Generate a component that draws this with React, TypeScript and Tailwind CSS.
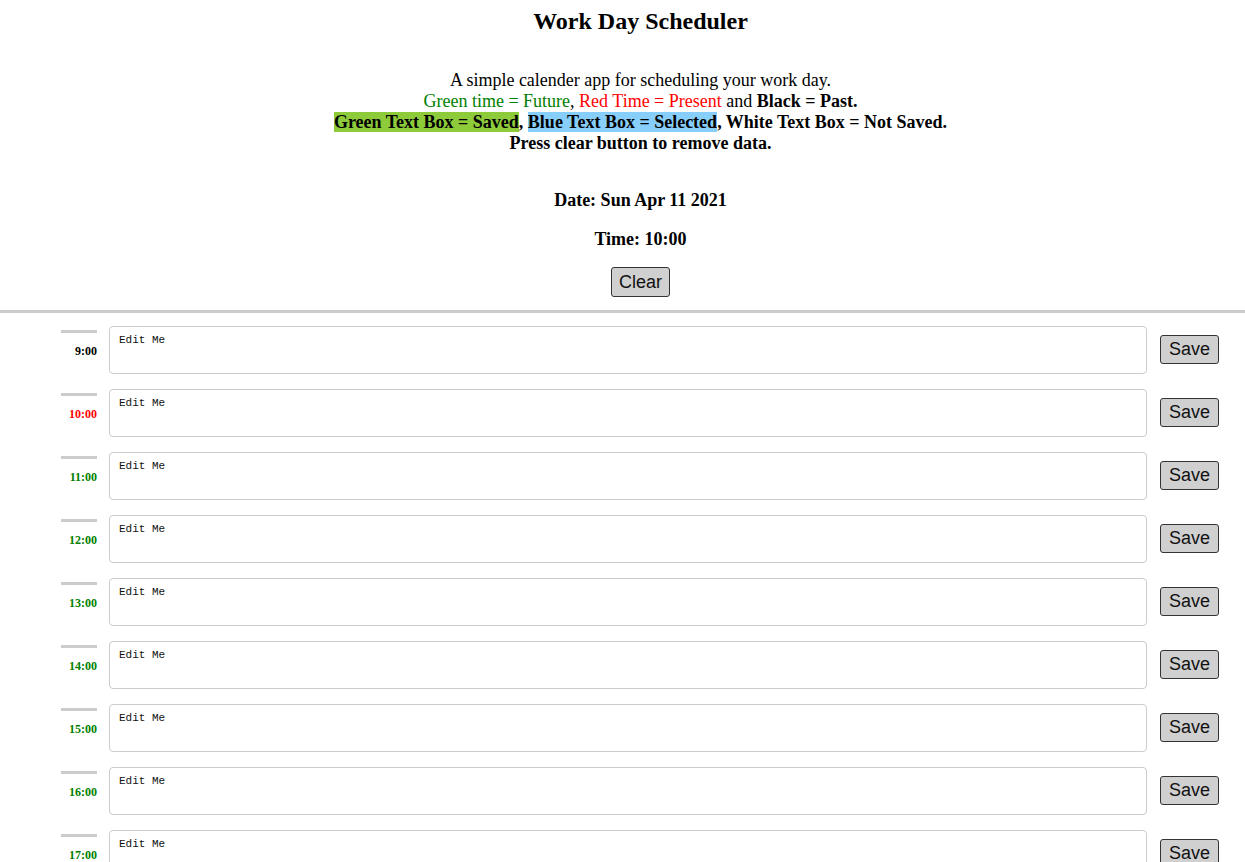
import { useState } from 'react';

const hours = [9, 10, 11, 12, 13, 14, 15, 16, 17];
const currentHour = 10;

function hourColor(h: number) {
  if (h < currentHour) return 'text-black';
  if (h === currentHour) return 'text-[#ff0000]';
  return 'text-[#008000]';
}

export default function App() {
  const [notes, setNotes] = useState<Record<number, string>>(
    Object.fromEntries(hours.map((h) => [h, 'Edit Me']))
  );

  return (
    <div className="min-h-screen bg-white text-black font-['Liberation_Serif',serif]">
      {/* Header */}
      <header className="pl-[36px] text-center">
        <h1 className="pt-[7px] text-[24px] leading-[28px] font-bold">Work Day Scheduler</h1>
        <div className="mt-[35px] text-[18px] leading-[21px]">
          <p>A simple calender app for scheduling your work day.</p>
          <p>
            <span className="text-[#008000]">Green time = Future</span>,{' '}
            <span className="text-[#ff0000]">Red Time = Present</span> and{' '}
            <b>Black = Past.</b>
          </p>
          <p className="font-bold">
            <span className="bg-[#8dcb3a]">Green Text Box = Saved</span>,{' '}
            <span className="bg-[#87cefa]">Blue Text Box = Selected</span>, White Text Box = Not Saved.
          </p>
          <p className="font-bold">Press clear button to remove data.</p>
        </div>
        <p className="mt-[36px] text-[18px] leading-[21px] font-bold">Date: Sun Apr 11 2021</p>
        <p className="mt-[18px] text-[18px] leading-[21px] font-bold">Time: 10:00</p>
        <div className="mt-[17px] flex justify-center">
          <button
            onClick={() => setNotes(Object.fromEntries(hours.map((h) => [h, 'Edit Me'])))}
            className="h-[30px] w-[59px] rounded-[3px] border border-[#333] bg-[#d0d0d0] font-['Liberation_Sans',sans-serif] text-[18px] text-[#111]"
          >
            Clear
          </button>
        </div>
      </header>

      <hr className="mt-[13px] border-0 border-t-[3px] border-[#cccccc]" />

      {/* Hour rows */}
      <main className="pt-[13px] pl-[61px] pr-[26px]">
        {hours.map((h) => (
          <div key={h} className="mb-[15px] flex items-start">
            <div className={`mt-[4px] w-[36px] border-t-[3px] border-[#cccccc] pt-[11px] text-right text-[12px] leading-[14px] font-bold ${hourColor(h)}`}>
              {h}:00
            </div>
            <textarea
              value={notes[h]}
              onChange={(e) => setNotes({ ...notes, [h]: e.target.value })}
              className="ml-[12px] h-[48px] flex-1 resize-none rounded-[4px] border border-[#cccccc] px-[9px] pt-[7px] pb-[5px] font-['Liberation_Mono',monospace] text-[11px] leading-[13px] text-[#111] outline-none"
            />
            <button className="ml-[13px] mt-[9px] h-[29px] w-[59px] rounded-[3px] border border-[#333] bg-[#d0d0d0] font-['Liberation_Sans',sans-serif] text-[18px] text-[#111]">
              Save
            </button>
          </div>
        ))}
      </main>
    </div>
  );
}
